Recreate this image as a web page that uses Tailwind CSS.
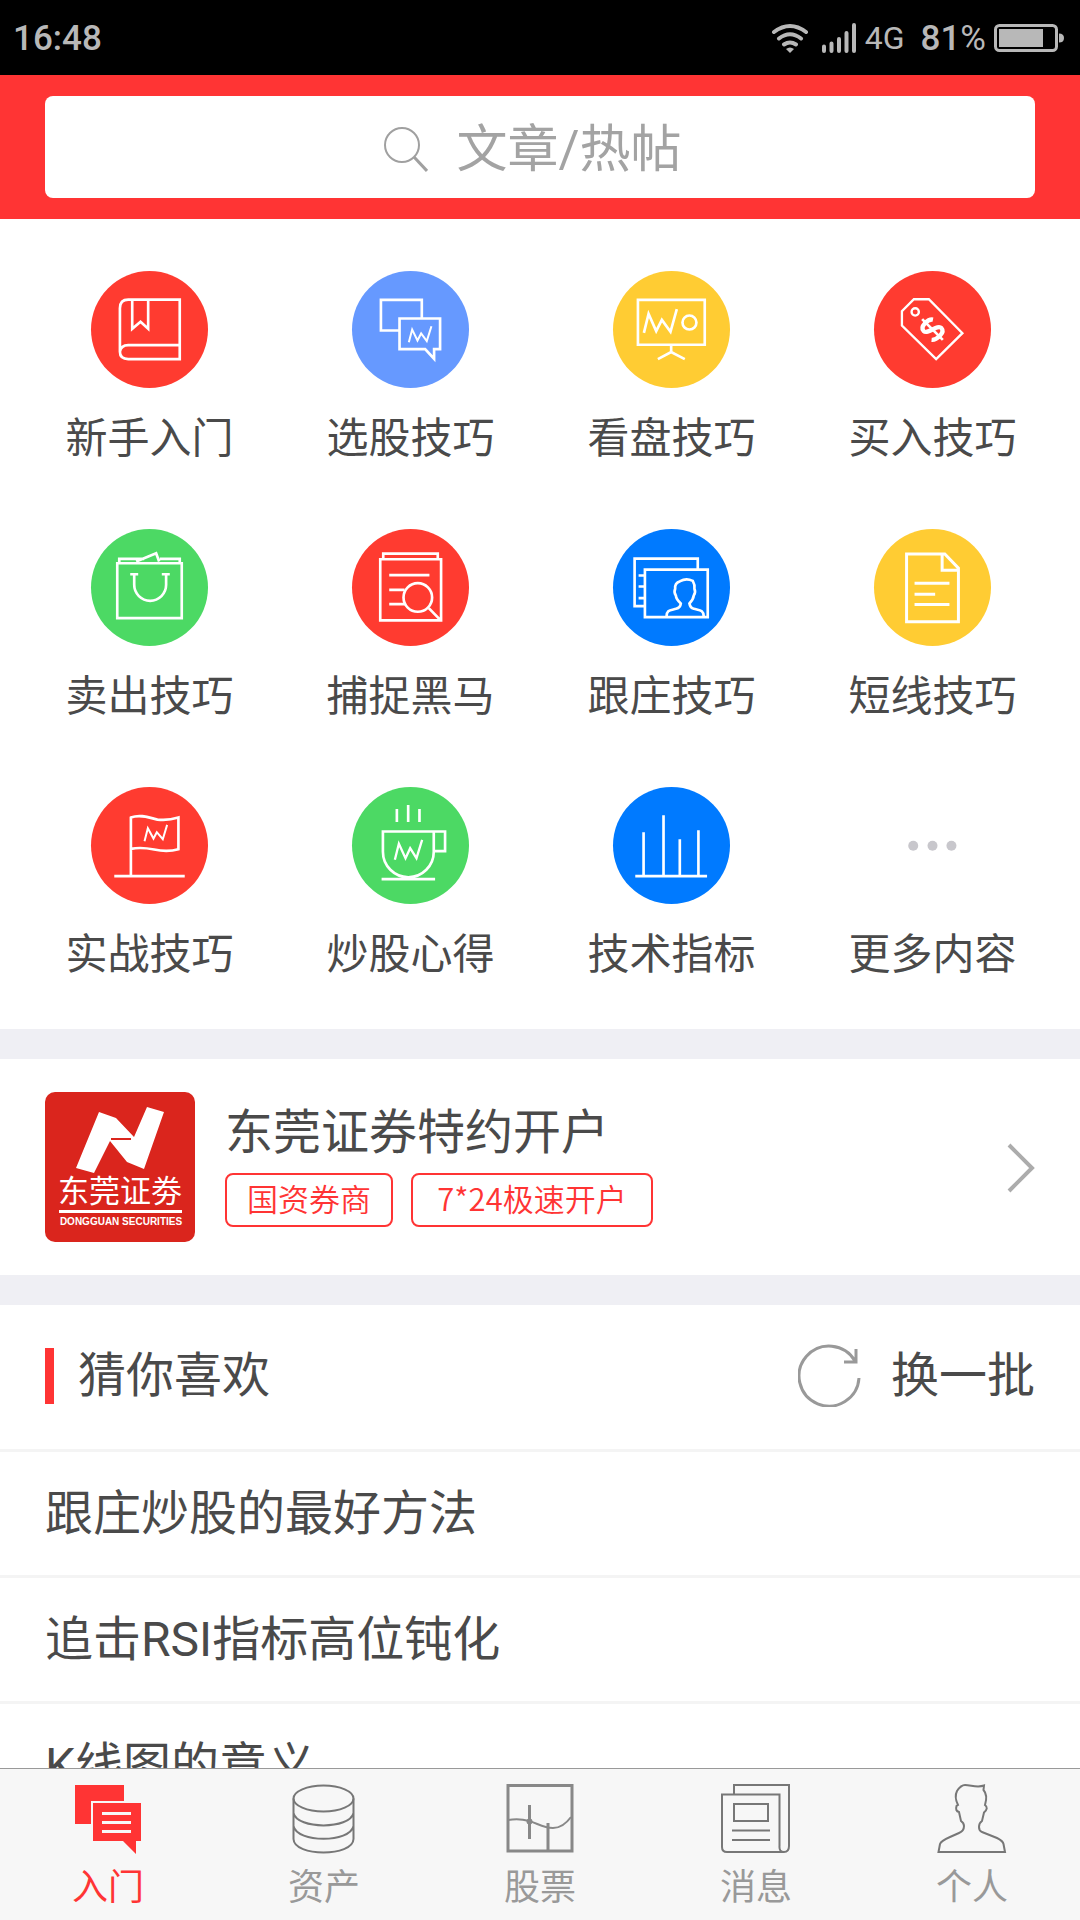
<!DOCTYPE html>
<html lang="zh-CN">
<head>
<meta charset="utf-8">
<meta name="viewport" content="width=device-width, initial-scale=1">
<title>入门</title>
<script src="https://cdn.jsdelivr.net/npm/@tailwindcss/browser@4"></script>
</head>
<body class="flex h-screen flex-col overflow-hidden bg-white font-[Roboto,'Noto_Sans_CJK_SC',sans-serif] text-[#4a4a4a]">

<!-- Status bar -->
<div class="flex h-[75px] shrink-0 items-center justify-between bg-black pr-[15px] pl-[13px] pt-1 text-[35px] font-medium text-[#b8b8b8]">
  <span>16:48</span>
  <div class="flex items-center">
    <svg class="mr-3 mb-1 h-[30px] w-[38px]" viewBox="0 0 38 30" fill="none" stroke="currentColor" stroke-width="4" stroke-linecap="round"><path d="M3 9Q19-3 35 9M8 15.500Q19 7 30 15.500M13 21.500Q19 17.500 25 21.500"/><path stroke="none" fill="currentColor" d="M15 26Q19 23 23 26L19 30Z"/></svg>
    <svg class="mr-2 mb-1 h-[31px] w-[36px]" viewBox="0 0 36 31" stroke="currentColor" stroke-width="4" stroke-linecap="round"><path d="M3 29V24.500M10.500 29V21.500M18 29V17M25.500 29V11M33 29V3"/></svg>
    <span class="mr-4 mb-1 text-[32px] font-normal">4G</span>
    <span class="mr-2">81<span class="font-normal">%</span></span>
    <svg class="mb-1 h-7 w-[71px]" viewBox="0 0 71 28" fill="none"><rect x="1.500" y="1.500" width="61" height="25" rx="4" stroke="currentColor" stroke-width="3"/><path fill="currentColor" d="M5 5H49V23H5ZM65 9.500Q70 9.500 70 14T65 18.500Z"/></svg>
  </div>
</div>

<!-- Search -->
<header class="shrink-0 bg-[#ff3434] px-[45px] py-[21px]">
  <label class="flex h-[102px] items-center justify-center gap-[29px] rounded-lg bg-white pt-1">
    <svg class="h-[46px] w-11" viewBox="0 0 44 46" fill="none" stroke="#a0a0a0" stroke-width="2"><circle cx="18" cy="19" r="17"/><path stroke-width="3" d="M30 31L43 45"/></svg>
    <input type="text" aria-label="搜索" placeholder="文章/热帖" class="h-20 w-60 text-[51px] outline-none placeholder:text-[#a3a3a3]">
  </label>
</header>

<main class="min-h-0 flex-1 overflow-hidden bg-[#efeff4]">

  <!-- Topics -->
  <section class="grid grid-cols-4 gap-y-[60px] bg-white pt-[52px] pr-[17px] pb-11 pl-[19px] text-[42px] leading-[60px]">
    <a href="#" class="flex flex-col items-center gap-[21px]">
      <svg class="size-[117px] rounded-full bg-[#ff3b30]" viewBox="0 0 352 352" fill="none" stroke="#fff" stroke-width="8"><path d="M267 86H112Q87 86 87 112V243Q87 265 112 265H267ZM267 223H112Q90 223 87 243M124 86V174L149 153L172 174V86"/></svg>
      <span>新手入门</span>
    </a>
    <a href="#" class="flex flex-col items-center gap-[21px]">
      <svg class="size-[117px] rounded-full bg-[#6699ff]" viewBox="0 0 352 352" fill="none" stroke="#fff" stroke-width="8"><path d="M143 179H87V87H210V141M143 143H265V235H247V264L220 235H143Z"/><path stroke-width="6" d="M171 214L181 176L197 209L208 188L225 211L239 166"/></svg>
      <span>选股技巧</span>
    </a>
    <a href="#" class="flex flex-col items-center gap-[21px]">
      <svg class="size-[117px] rounded-full bg-[#ffcc33]" viewBox="0 0 352 352" fill="none" stroke="#fff" stroke-width="8"><path d="M75 87H276V222H75ZM93 186L107 129L130 181L147 147L173 183L192 115M175 222V244M135 265L175 244L216 265"/><circle cx="230" cy="155" r="21"/></svg>
      <span>看盘技巧</span>
    </a>
    <a href="#" class="flex flex-col items-center gap-[21px]">
      <svg class="size-[117px] rounded-full bg-[#ff3b30]" viewBox="0 0 352 352" fill="none" stroke="#fff" stroke-width="7"><path d="M120 85H165L266 187L187 265L84 164V121Z"/><circle cx="124" cy="123" r="11"/><g transform="translate(176 176) rotate(-45)"><path stroke-width="13" d="M22-20C14-32-21-34-22-16C-22 2 22-2 22 16C21 34-14 32-24 20"/><path stroke-width="8" d="M0-44V44"/></g></svg>
      <span>买入技巧</span>
    </a>
    <a href="#" class="flex flex-col items-center gap-[21px]">
      <svg class="size-[117px] rounded-full bg-[#4cd964]" viewBox="0 0 352 352" fill="none" stroke="#fff" stroke-width="8"><path d="M79 103H273V268H79ZM85 103V90H160M207 90H267V103M136 98L196 73L205 98M118 136H142M213 136H237M130 136V168A48 48 0 0 0 226 168V136"/></svg>
      <span>卖出技巧</span>
    </a>
    <a href="#" class="flex flex-col items-center gap-[21px]">
      <svg class="size-[117px] rounded-full bg-[#ff3b30]" viewBox="0 0 352 352" fill="none" stroke="#fff" stroke-width="8"><path d="M85 91H268V275H85ZM94 91V74H258V91M112 139H233M112 183H158M112 226H160M231 238L264 272"/><circle cx="198" cy="206" r="43"/></svg>
      <span>捕捉黑马</span>
    </a>
    <a href="#" class="flex flex-col items-center gap-[21px]">
      <svg class="size-[117px] rounded-full bg-[#007aff]" viewBox="0 0 352 352" fill="none" stroke="#fff" stroke-width="8"><path d="M95 232H65V89H255V120M96 122H285V265H96ZM77 140H96M77 173H96M77 208H96M161 263C162 243 170 245 190 240Q203 237 204 224Q190 212 189 200Q182 190 187 180Q185 162 202 157Q220 147 240 156Q247 168 245 180Q250 190 243 200Q242 212 230 224Q232 237 243 240C262 245 272 243 273 263"/></svg>
      <span>跟庄技巧</span>
    </a>
    <a href="#" class="flex flex-col items-center gap-[21px]">
      <svg class="size-[117px] rounded-full bg-[#ffcc33]" viewBox="0 0 352 352" fill="none" stroke="#fff" stroke-width="9"><path d="M98 75H213L254 118V279H98ZM205 75V124H254M122 163H227M122 196H184M122 227H227"/></svg>
      <span>短线技巧</span>
    </a>
    <a href="#" class="flex flex-col items-center gap-[21px]">
      <svg class="size-[117px] rounded-full bg-[#ff3b30]" viewBox="0 0 352 352" fill="none" stroke="#fff" stroke-width="8"><path d="M120 268V92C150 80 180 94 200 98Q230 102 263 92V187Q230 197 190 188Q150 180 120 186M70 268H282"/><path stroke-width="6" d="M161 163L171 124L188 155L198 136L216 157L229 114"/></svg>
      <span>实战技巧</span>
    </a>
    <a href="#" class="flex flex-col items-center gap-[21px]">
      <svg class="size-[117px] rounded-full bg-[#4cd964]" viewBox="0 0 352 352" fill="none" stroke="#fff" stroke-width="8"><path d="M93 134H246V195A76 76 0 0 1 93 195ZM246 134H280V193H248M89 277H250M135 66V105M169 54V105M203 66V105"/><path stroke-width="7" d="M129 219L141 171L161 214L175 184L194 214L211 159"/></svg>
      <span>炒股心得</span>
    </a>
    <a href="#" class="flex flex-col items-center gap-[21px]">
      <svg class="size-[117px] rounded-full bg-[#007aff]" viewBox="0 0 352 352" fill="none" stroke="#fff" stroke-width="8"><path d="M67 268H283M92 136V268M152 85V268M201 157V268M257 130V268"/></svg>
      <span>技术指标</span>
    </a>
    <a href="#" class="flex flex-col items-center gap-[21px]">
      <svg class="size-[117px]" viewBox="0 0 352 352" fill="#c8c7cc"><circle cx="118" cy="177" r="15"/><circle cx="176" cy="177" r="15"/><circle cx="233" cy="177" r="15"/></svg>
      <span>更多内容</span>
    </a>
  </section>

  <!-- Broker promotion -->
  <a href="#" class="mt-[30px] flex items-center bg-white px-[45px] py-[33px]">
    <svg class="mr-[30px] size-[150px] rounded-[10px] bg-[#da251d]" viewBox="0 0 150 150" fill="#fff" role="img" aria-label="东莞证券">
      <path d="M54 20L71 26L89 45L102 15L119 20L99 77L82 70L65 49L49 81L31 76Z"/>
      <path fill="#da251d" d="M66 46H86V48H66Z"/>
      <text x="75" y="110" text-anchor="middle" font-size="31" class="font-['Noto_Sans_CJK_SC',sans-serif]">东莞证劵</text>
      <path d="M14 118H137V121H14Z"/>
      <text x="76" y="133" text-anchor="middle" font-size="10" class="font-['Liberation_Sans',sans-serif] font-bold">DONGGUAN SECURITIES</text>
    </svg>
    <span class="flex-1 pb-1">
      <span class="mb-[10px] block text-5xl leading-[60px]">东莞证券特约开户</span>
      <span class="flex gap-[18px] text-center font-['Noto_Sans_CJK_SC',sans-serif] text-[31px] leading-[46px] font-[350] text-[#ff3434]">
        <span class="rounded-lg border-2 border-[#ff3434] px-5 pb-1">国资券商</span>
        <span class="min-w-[242px] rounded-lg border-2 border-[#ff3434] px-5 pb-1">7*24极速开户</span>
      </span>
    </span>
    <svg class="mt-0.5 h-[50px] w-7" viewBox="0 0 28 50" fill="none" stroke="#acacac" stroke-width="4"><path d="M2 2L25 25L2 48"/></svg>
  </a>

  <!-- Recommendations -->
  <section class="mt-[30px] bg-white text-5xl">
    <div class="flex h-[147px] items-center border-b-[3px] border-[#f4f4f4] px-[45px] pb-[3px]">
      <span class="mr-6 h-14 w-[9px] bg-[#ff3434]"></span>
      <h2 class="flex-1">猜你喜欢</h2>
      <button class="flex items-center gap-[30px]">
        <svg class="size-[63px]" viewBox="0 0 63 63" fill="none" stroke="#999" stroke-width="3"><path d="M61 34A30 30 0 1 1 57 17M46 18H58V5"/></svg>
        <span>换一批</span>
      </button>
    </div>
    <a href="#" class="flex h-[126px] items-center border-b-[3px] border-[#f4f4f4] px-[45px]">跟庄炒股的最好方法</a>
    <a href="#" class="flex h-[126px] items-center border-b-[3px] border-[#f4f4f4] px-[45px]">追击RSI指标高位钝化</a>
    <a href="#" class="flex h-[126px] items-center border-b-[3px] border-[#f4f4f4] px-[45px]">K线图的意义</a>
  </section>
</main>

<!-- Tab bar -->
<nav class="grid shrink-0 grid-cols-5 border-t border-[#999] bg-[#f7f7f7] pt-[15px] pb-[10px] text-4xl leading-[44px] text-[#999]">
  <a href="#" aria-current="page" class="flex flex-col items-center gap-3 text-[#ff3434]">
    <svg class="size-[70px]" viewBox="0 0 70 70" fill="currentColor"><path d="M2 1H51V17H18V40H2ZM20 19H68V57H63V70L50 57H20Z"/><path stroke="#f7f7f7" stroke-width="3" d="M29 29.500H58M29 38.500H58M29 47.500H58"/></svg>
    <span>入门</span>
  </a>
  <a href="#" class="flex flex-col items-center gap-3">
    <svg class="size-[70px]" viewBox="0 0 70 70" fill="none" stroke="#777" stroke-width="2"><ellipse cx="34.500" cy="14.500" rx="30" ry="13"/><path d="M4.500 14.500V55C5 73 64 73 64.500 55V14.500M4.500 29C8 45.500 61 45.500 64.500 29M4.500 42C8 59 61 59 64.500 42"/></svg>
    <span>资产</span>
  </a>
  <a href="#" class="flex flex-col items-center gap-3">
    <svg class="size-[70px]" viewBox="0 0 70 70" fill="none" stroke="#888" stroke-width="2"><path stroke-width="3" d="M3 1.500H67V67H3ZM24.500 21V55M43 39V67"/><path d="M3 36Q14 34 24 37C32 39 38 44 48 44Q58 44 66 33"/><circle cx="24.500" cy="37.500" r="2"/></svg>
    <span>股票</span>
  </a>
  <a href="#" class="flex flex-col items-center gap-3">
    <svg class="size-[70px]" viewBox="0 0 70 70" fill="none" stroke="#777" stroke-width="2"><path d="M13 10V1H68V62Q68 68 63 68T58.500 62V10.500H1V63Q1 68 6 68H63M13 20H47V37H13ZM11 46.500H49M11 56H49"/></svg>
    <span>消息</span>
  </a>
  <a href="#" class="flex flex-col items-center gap-3">
    <svg class="size-[70px]" viewBox="0 0 70 70" fill="none" stroke="#777" stroke-width="2"><path d="M1.500 68L3 60Q4 57 13 53L22 49Q27 47 27 42Q27 39 24 37L22 28Q18 27 19.500 22L21 21Q17 13 20 7Q24 1 28 1C34 1 40 4 47 1.500L46.500 6Q51 11 48 21Q52 24 47 28.500L45 37Q42 39 42 43Q42 47 45 48L60 54Q66 57 66.500 60L68 68Z"/></svg>
    <span>个人</span>
  </a>
</nav>
</body>
</html>
